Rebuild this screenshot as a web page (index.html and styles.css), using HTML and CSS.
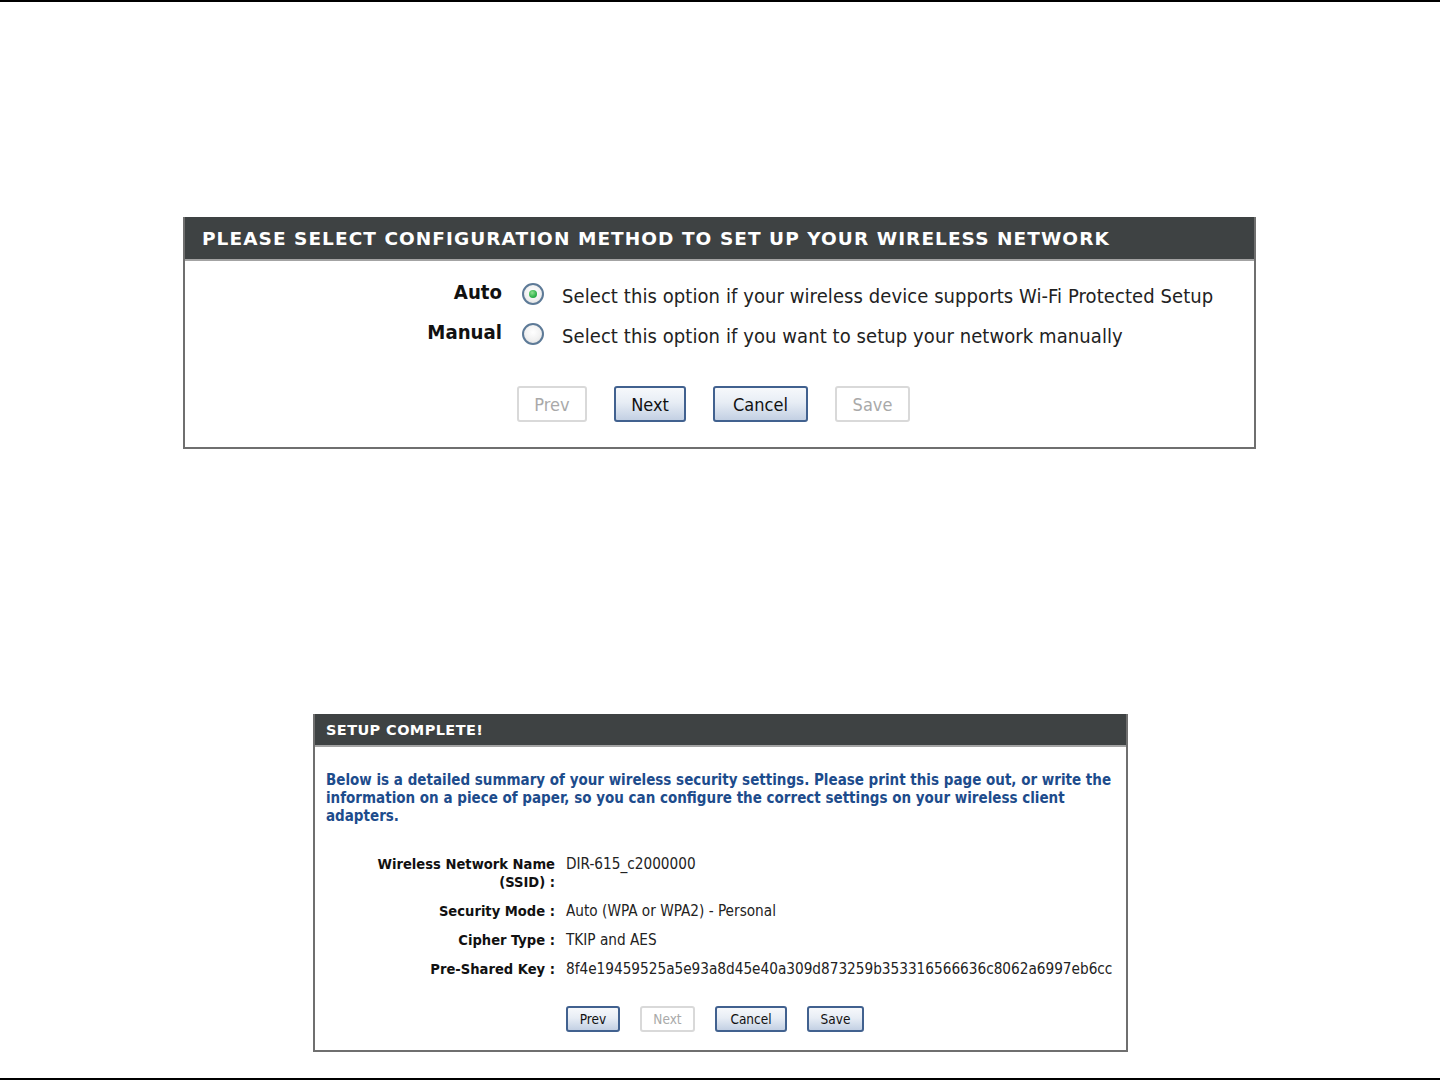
FILE: index.html
```html
<!DOCTYPE html>
<html>
<head>
<meta charset="utf-8">
<link rel="stylesheet" href="styles.css">
</head>
<body>
<div class="page">
  <div class="rule"></div>

  <section class="panel panel-method">
    <div class="panel-head head-lg">PLEASE SELECT CONFIGURATION METHOD TO SET UP YOUR WIRELESS NETWORK</div>
    <div class="method-body">
      <div class="method-grid">
        <div class="m-label">Auto</div>
        <div class="radio checked"></div>
        <div class="m-text">Select this option if your wireless device supports Wi-Fi Protected Setup</div>
        <div class="m-label">Manual</div>
        <div class="radio"></div>
        <div class="m-text">Select this option if you want to setup your network manually</div>
      </div>
      <div class="btn-row btn-row-lg">
        <span class="btn lg disabled w-prev">Prev</span>
        <span class="btn lg w-next">Next</span>
        <span class="btn lg w-cancel">Cancel</span>
        <span class="btn lg disabled w-save">Save</span>
      </div>
    </div>
  </section>

  <section class="panel panel-done">
    <div class="panel-head head-sm">SETUP COMPLETE!</div>
    <div class="done-body">
      <p class="note">Below is a detailed summary of your wireless security settings. Please print this page out, or write the information on a piece of paper, so you can configure the correct settings on your wireless client adapters.</p>
      <div class="summary">
        <div class="s-label">Wireless Network Name (SSID) :</div>
        <div class="s-value">DIR-615_c2000000</div>
        <div class="s-label">Security Mode :</div>
        <div class="s-value">Auto (WPA or WPA2) - Personal</div>
        <div class="s-label">Cipher Type :</div>
        <div class="s-value">TKIP and AES</div>
        <div class="s-label">Pre-Shared Key :</div>
        <div class="s-value">8f4e19459525a5e93a8d45e40a309d873259b353316566636c8062a6997eb6cc</div>
      </div>
      <div class="btn-row btn-row-sm">
        <span class="btn sm s-prev">Prev</span>
        <span class="btn sm disabled s-next">Next</span>
        <span class="btn sm s-cancel">Cancel</span>
        <span class="btn sm s-save">Save</span>
      </div>
    </div>
  </section>

  <div class="rule rule-bottom"></div>
</div>
</body>
</html>
```

FILE: styles.css
```css
html, body {
  margin: 0;
  padding: 0;
  background: #ffffff;
}

.page {
  width: 1440px;
  height: 1081px;
  font-family: "DejaVu Sans Condensed", "DejaVu Sans", sans-serif;
  color: #222;
}

.rule {
  height: 2px;
  background: #000;
}

.rule-bottom {
  margin-top: 26px;
}

.panel {
  box-sizing: border-box;
  border: 2px solid #6f6f6f;
  border-top: 0;
  background: #fff;
}

.panel-head {
  background: #3e4243;
  color: #fff;
  font-family: "DejaVu Sans", sans-serif;
  font-weight: bold;
  border-bottom: 2px solid #a3a3a3;
  white-space: nowrap;
}

/* ---------- panel 1 ---------- */
.panel-method {
  margin: 215px 0 0 183px;
  width: 1073px;
  height: 232px;
}

.head-lg {
  height: 42px;
  line-height: 44px;
  font-size: 18.5px;
  letter-spacing: 1.05px;
  padding-left: 17px;
}

.method-body {
  padding-top: 13px;
}

.method-grid {
  display: grid;
  grid-template-columns: 317px 22px 1fr;
  grid-auto-rows: 40px;
  column-gap: 18px;
  align-items: center;
}

.method-grid .radio {
  margin-left: 2px;
}

.m-label {
  text-align: right;
  font-weight: bold;
  font-size: 20.2px;
  color: #111;
  padding-bottom: 4px;
}

.m-text {
  font-size: 20px;
  color: #222;
  letter-spacing: 0.08px;
  margin-left: 2px;
  padding-top: 3px;
}

.radio {
  box-sizing: border-box;
  width: 22px;
  height: 22px;
  border-radius: 50%;
  border: 2px solid #5d7a97;
  background: radial-gradient(circle at 50% 40%, #ffffff 0%, #f1f1f1 55%, #d9d9d9 100%);
  display: flex;
  align-items: center;
  justify-content: center;
}

.radio.checked::after {
  content: "";
  width: 8px;
  height: 8px;
  border-radius: 50%;
  background: radial-gradient(circle at 40% 35%, #8fe08f 0%, #2fb24a 60%, #1d8a35 100%);
}

/* ---------- buttons ---------- */
.btn-row {
  display: flex;
}

.btn-row-lg {
  margin-top: 32px;
  padding-left: 332px;
  gap: 27px;
}

.btn-row-sm {
  margin-top: 28px;
  padding-left: 240px;
  gap: 20px;
}

.btn {
  box-sizing: border-box;
  display: flex;
  align-items: center;
  justify-content: center;
  border: 2px solid #41618f;
  border-radius: 3px;
  background: linear-gradient(to bottom, #f6f8fb 0%, #e7edf5 45%, #c3d0e3 100%);
  color: #111;
}

.btn.disabled {
  border: 2px solid #d9d9d9;
  background: #fff;
  color: #a9a9a9;
}

.btn.lg {
  height: 36px;
  font-size: 18px;
}

.btn.sm {
  height: 26px;
  font-size: 13.5px;
}

.w-prev { width: 70px; }
.w-next { width: 72px; }
.w-cancel { width: 95px; }
.w-save { width: 75px; }

.s-prev { width: 54px; }
.s-next { width: 55px; }
.s-cancel { width: 72px; }
.s-save { width: 57px; }

/* ---------- panel 2 ---------- */
.panel-done {
  margin: 265px 0 0 313px;
  width: 815px;
  height: 338px;
}

.head-sm {
  height: 31px;
  line-height: 32px;
  font-size: 14.5px;
  letter-spacing: 0.4px;
  padding-left: 11px;
}

.done-body {
  padding: 24px 10px 0 11px;
}

.note {
  margin: 0;
  color: #1d4c8c;
  font-weight: bold;
  font-size: 15px;
  line-height: 18px;
}

.summary {
  margin-top: 30px;
  display: grid;
  grid-template-columns: 229px 1fr;
  column-gap: 11px;
  row-gap: 11px;
  font-size: 14.6px;
  line-height: 18px;
}

.s-label {
  text-align: right;
  font-weight: bold;
  color: #111;
  padding-left: 40px;
}

.s-value {
  color: #222;
  white-space: nowrap;
  font-size: 15.2px;
}
```
